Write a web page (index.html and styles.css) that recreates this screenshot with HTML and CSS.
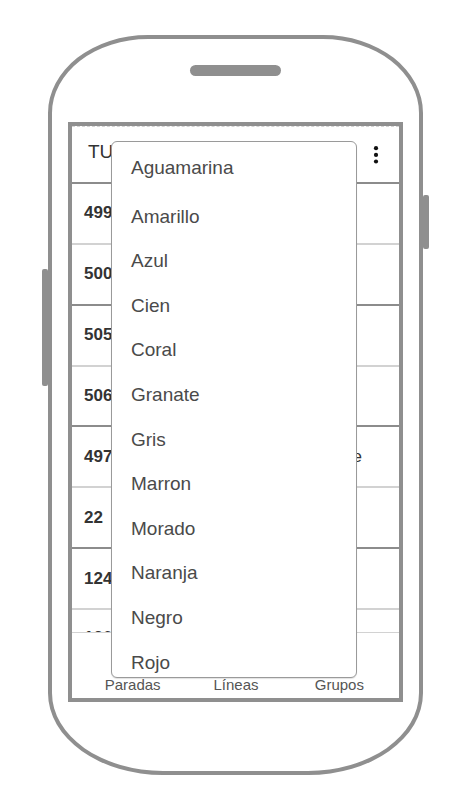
FILE: index.html
```html
<!DOCTYPE html>
<html lang="es">
<head>
<meta charset="utf-8">
<title>TUSSAM</title>
<link rel="stylesheet" href="styles.css">
</head>
<body>
<div class="phone">
  <span class="side-btn side-left"></span>
  <span class="side-btn side-right"></span>
  <div class="speaker"></div>
  <div class="screen">
    <header class="appbar">
      <span class="title">TUSSAM</span>
      <svg class="kebab" width="6" height="18" viewBox="0 0 6 18" aria-hidden="true">
        <circle cx="3" cy="2.2" r="2.1"/>
        <circle cx="3" cy="8.9" r="2.1"/>
        <circle cx="3" cy="15.5" r="2.1"/>
      </svg>
    </header>
    <ul class="stops">
      <li class="stop light"><b>4995</b></li>
      <li class="stop dark"><b>5003</b></li>
      <li class="stop light"><b>5051</b></li>
      <li class="stop dark"><b>5062</b></li>
      <li class="stop light"><b>4977</b><span class="dest">Parque</span></li>
      <li class="stop dark"><b>22</b></li>
      <li class="stop light"><b>1245</b></li>
      <li class="stop dark last"><b>1200</b></li>
    </ul>
    <nav class="tabs">
      <span class="tab">Paradas</span>
      <span class="tab">Líneas</span>
      <span class="tab">Grupos</span>
    </nav>
    <ul class="menu">
      <li class="menu-item">Aguamarina</li>
      <li class="menu-item">Amarillo</li>
      <li class="menu-item">Azul</li>
      <li class="menu-item">Cien</li>
      <li class="menu-item">Coral</li>
      <li class="menu-item">Granate</li>
      <li class="menu-item">Gris</li>
      <li class="menu-item">Marron</li>
      <li class="menu-item">Morado</li>
      <li class="menu-item">Naranja</li>
      <li class="menu-item">Negro</li>
      <li class="menu-item">Rojo</li>
    </ul>
  </div>
</div>
</body>
</html>
```
FILE: styles.css
```css
* { box-sizing: border-box; }

html, body {
  margin: 0;
  background: #ffffff;
}

body {
  width: 474px;
  height: 812px;
  padding: 35px 0 0 48px;
  font-family: "Liberation Sans", Arial, sans-serif;
  overflow: hidden;
}

.phone {
  position: relative;
  width: 375px;
  height: 740px;
  border: 4px solid #8f8f8f;
  border-radius: 100px 100px 115px 115px / 78px 78px 82px 82px;
  display: flex;
  flex-direction: column;
  align-items: center;
  padding-top: 26px;
  background: #fff;
}

.side-btn {
  position: absolute;
  width: 6px;
  background: #8f8f8f;
  border-radius: 2px;
}
.side-left { left: -10px; top: 230px; height: 117px; }
.side-right { right: -10px; top: 156px; height: 54px; }

.speaker {
  width: 91px;
  height: 11px;
  border-radius: 6px;
  background: #8f8f8f;
  margin-bottom: 46px;
}

.screen {
  position: relative;
  width: 335px;
  height: 580px;
  border: 4px solid #8f8f8f;
  display: flex;
  flex-direction: column;
  background: #fff;
}

.appbar {
  height: 58px;
  flex: none;
  display: flex;
  align-items: center;
  justify-content: space-between;
  padding: 0 20px 6px 16px;
  border-top: 1px dashed #d4d4d4;
  border-bottom: 2px solid #8c8c8c;
}

.title {
  font-size: 19px;
  color: #333;
  white-space: nowrap;
}

.kebab {
  fill: #111;
  margin-top: 7px;
}

.stops {
  list-style: none;
  margin: 0;
  padding: 0;
  flex: 1;
  overflow: hidden;
}

.stop {
  height: 60.86px;
  display: flex;
  align-items: center;
  padding: 0 37px 0 12px;
  font-size: 17px;
  color: #333;
}
.stop b { font-weight: bold; }
.stop.light { border-bottom: 2px solid #d2d2d2; }
.stop.dark { border-bottom: 2px solid #8c8c8c; }
.stop.last { align-items: flex-start; padding-top: 18px; }

.dest {
  margin-left: auto;
  font-size: 17px;
  color: #333;
}

.tabs {
  flex: none;
  height: 66px;
  display: flex;
  align-items: flex-end;
  padding: 0 8px 5px 9px;
  border-top: 1px solid #d2d2d2;
  background: #fff;
}

.tab {
  flex: 1;
  text-align: center;
  font-size: 15px;
  line-height: 17px;
  color: #555;
}

.menu {
  position: absolute;
  left: 39px;
  top: 15px;
  width: 246px;
  height: 537px;
  margin: 0;
  padding: 0;
  list-style: none;
  background: #fff;
  border: 1px solid #9a9a9a;
  border-radius: 6px;
  box-shadow: 0 1px 1px rgba(0, 0, 0, 0.12);
  overflow: hidden;
}

.menu-item {
  height: 44.6px;
  display: flex;
  align-items: center;
  padding-left: 19px;
  font-size: 19px;
  color: #4a4a4a;
}
.menu-item:first-child { height: 52.3px; }
```
